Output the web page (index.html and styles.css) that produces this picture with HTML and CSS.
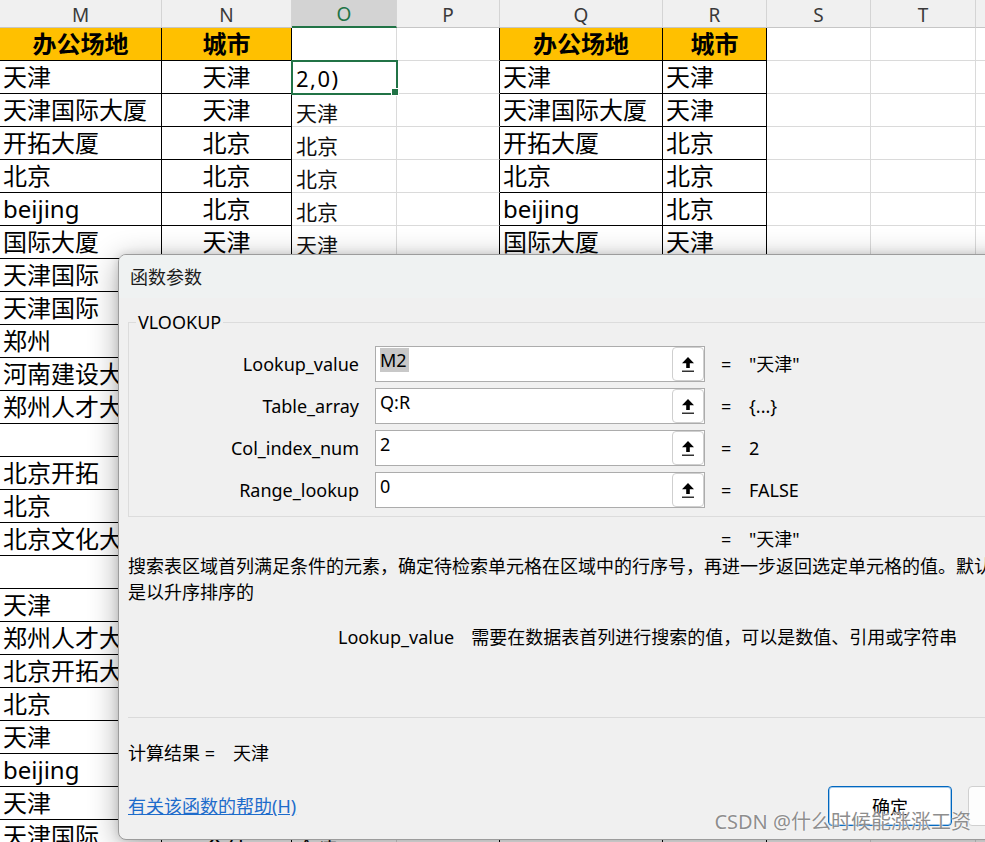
FILE: index.html
```html
<!DOCTYPE html>
<html lang="zh-CN">
<head>
<meta charset="utf-8">
<title>函数参数 - VLOOKUP</title>
<link rel="stylesheet" href="styles.css">
</head>
<body>
<div class="app">
  <div class="sheet">
    <div class="colhead">M</div><div class="colhead">N</div><div class="colhead sel">O</div><div class="colhead">P</div><div class="colhead">Q</div><div class="colhead">R</div><div class="colhead">S</div><div class="colhead">T</div><div class="colhead"></div>

    <div class="cell tb hd">办公场地</div><div class="cell tb hd">城市</div><div class="cell"></div><div class="cell pe"></div><div class="cell tb hd">办公场地</div><div class="cell tb hd">城市</div><div class="cell"></div><div class="cell"></div><div class="cell"></div>

    <div class="cell tb">天津</div><div class="cell tb ctr">天津</div><div class="cell active"><span class="edit">2,0)</span></div><div class="cell pe"></div><div class="cell tb">天津</div><div class="cell tb">天津</div><div class="cell"></div><div class="cell"></div><div class="cell"></div>

    <div class="cell tb">天津国际大厦</div><div class="cell tb ctr">天津</div><div class="cell oc">天津</div><div class="cell pe"></div><div class="cell tb">天津国际大厦</div><div class="cell tb">天津</div><div class="cell"></div><div class="cell"></div><div class="cell"></div>

    <div class="cell tb">开拓大厦</div><div class="cell tb ctr">北京</div><div class="cell oc">北京</div><div class="cell pe"></div><div class="cell tb">开拓大厦</div><div class="cell tb">北京</div><div class="cell"></div><div class="cell"></div><div class="cell"></div>

    <div class="cell tb">北京</div><div class="cell tb ctr">北京</div><div class="cell oc">北京</div><div class="cell pe"></div><div class="cell tb">北京</div><div class="cell tb">北京</div><div class="cell"></div><div class="cell"></div><div class="cell"></div>

    <div class="cell tb">beijing</div><div class="cell tb ctr">北京</div><div class="cell oc">北京</div><div class="cell pe"></div><div class="cell tb">beijing</div><div class="cell tb">北京</div><div class="cell"></div><div class="cell"></div><div class="cell"></div>

    <div class="cell tb">国际大厦</div><div class="cell tb ctr">天津</div><div class="cell oc">天津</div><div class="cell pe"></div><div class="cell tb">国际大厦</div><div class="cell tb">天津</div><div class="cell"></div><div class="cell"></div><div class="cell"></div>

    <div class="cell tb">天津国际</div><div class="cell tb ctr"></div><div class="cell oc"></div><div class="cell pe"></div><div class="cell tb"></div><div class="cell tb"></div><div class="cell"></div><div class="cell"></div><div class="cell"></div>

    <div class="cell tb">天津国际</div><div class="cell tb ctr"></div><div class="cell oc"></div><div class="cell pe"></div><div class="cell tb"></div><div class="cell tb"></div><div class="cell"></div><div class="cell"></div><div class="cell"></div>

    <div class="cell tb">郑州</div><div class="cell tb ctr"></div><div class="cell oc"></div><div class="cell pe"></div><div class="cell tb"></div><div class="cell tb"></div><div class="cell"></div><div class="cell"></div><div class="cell"></div>

    <div class="cell tb">河南建设大厦</div><div class="cell tb ctr"></div><div class="cell oc"></div><div class="cell pe"></div><div class="cell tb"></div><div class="cell tb"></div><div class="cell"></div><div class="cell"></div><div class="cell"></div>

    <div class="cell tb">郑州人才大厦</div><div class="cell tb ctr"></div><div class="cell oc"></div><div class="cell pe"></div><div class="cell tb"></div><div class="cell tb"></div><div class="cell"></div><div class="cell"></div><div class="cell"></div>

    <div class="cell tb"></div><div class="cell tb ctr"></div><div class="cell oc"></div><div class="cell pe"></div><div class="cell tb"></div><div class="cell tb"></div><div class="cell"></div><div class="cell"></div><div class="cell"></div>

    <div class="cell tb">北京开拓</div><div class="cell tb ctr"></div><div class="cell oc"></div><div class="cell pe"></div><div class="cell tb"></div><div class="cell tb"></div><div class="cell"></div><div class="cell"></div><div class="cell"></div>

    <div class="cell tb">北京</div><div class="cell tb ctr"></div><div class="cell oc"></div><div class="cell pe"></div><div class="cell tb"></div><div class="cell tb"></div><div class="cell"></div><div class="cell"></div><div class="cell"></div>

    <div class="cell tb">北京文化大厦</div><div class="cell tb ctr"></div><div class="cell oc"></div><div class="cell pe"></div><div class="cell tb"></div><div class="cell tb"></div><div class="cell"></div><div class="cell"></div><div class="cell"></div>

    <div class="cell tb"></div><div class="cell tb ctr"></div><div class="cell oc"></div><div class="cell pe"></div><div class="cell tb"></div><div class="cell tb"></div><div class="cell"></div><div class="cell"></div><div class="cell"></div>

    <div class="cell tb">天津</div><div class="cell tb ctr"></div><div class="cell oc"></div><div class="cell pe"></div><div class="cell tb"></div><div class="cell tb"></div><div class="cell"></div><div class="cell"></div><div class="cell"></div>

    <div class="cell tb">郑州人才大厦</div><div class="cell tb ctr"></div><div class="cell oc"></div><div class="cell pe"></div><div class="cell tb"></div><div class="cell tb"></div><div class="cell"></div><div class="cell"></div><div class="cell"></div>

    <div class="cell tb">北京开拓大厦</div><div class="cell tb ctr"></div><div class="cell oc"></div><div class="cell pe"></div><div class="cell tb"></div><div class="cell tb"></div><div class="cell"></div><div class="cell"></div><div class="cell"></div>

    <div class="cell tb">北京</div><div class="cell tb ctr"></div><div class="cell oc"></div><div class="cell pe"></div><div class="cell tb"></div><div class="cell tb"></div><div class="cell"></div><div class="cell"></div><div class="cell"></div>

    <div class="cell tb">天津</div><div class="cell tb ctr"></div><div class="cell oc"></div><div class="cell pe"></div><div class="cell tb"></div><div class="cell tb"></div><div class="cell"></div><div class="cell"></div><div class="cell"></div>

    <div class="cell tb">beijing</div><div class="cell tb ctr"></div><div class="cell oc"></div><div class="cell pe"></div><div class="cell tb"></div><div class="cell tb"></div><div class="cell"></div><div class="cell"></div><div class="cell"></div>

    <div class="cell tb">天津</div><div class="cell tb ctr"></div><div class="cell oc"></div><div class="cell pe"></div><div class="cell tb"></div><div class="cell tb"></div><div class="cell"></div><div class="cell"></div><div class="cell"></div>

    <div class="cell tb">天津国际</div><div class="cell tb ctr">天津</div><div class="cell oc">天津</div><div class="cell pe"></div><div class="cell tb"></div><div class="cell tb"></div><div class="cell"></div><div class="cell"></div><div class="cell"></div>
  </div>

  <div class="dialog">
    <div class="dlg-title">函数参数</div>
    <fieldset class="args">
      <legend>VLOOKUP</legend>
      <div class="arg-grid">
        <div class="arg-label">Lookup_value</div>
        <div class="arg-input"><span class="arg-text"><span class="selected">M2</span></span><span class="ref-btn"><svg class="ref-icon" width="12" height="15" viewBox="0 0 12 15"><path d="M6 0 L12 6.2 H7.8 V11 H4.2 V6.2 H0 Z" fill="#000"/><rect x="0" y="13.6" width="12" height="1.2" fill="#000"/></svg></span></div>
        <div class="arg-result"><span class="eq">=</span><span>"天津"</span></div>

        <div class="arg-label">Table_array</div>
        <div class="arg-input"><span class="arg-text">Q:R</span><span class="ref-btn"><svg class="ref-icon" width="12" height="15" viewBox="0 0 12 15"><path d="M6 0 L12 6.2 H7.8 V11 H4.2 V6.2 H0 Z" fill="#000"/><rect x="0" y="13.6" width="12" height="1.2" fill="#000"/></svg></span></div>
        <div class="arg-result"><span class="eq">=</span><span>{...}</span></div>

        <div class="arg-label">Col_index_num</div>
        <div class="arg-input"><span class="arg-text">2</span><span class="ref-btn"><svg class="ref-icon" width="12" height="15" viewBox="0 0 12 15"><path d="M6 0 L12 6.2 H7.8 V11 H4.2 V6.2 H0 Z" fill="#000"/><rect x="0" y="13.6" width="12" height="1.2" fill="#000"/></svg></span></div>
        <div class="arg-result"><span class="eq">=</span><span>2</span></div>

        <div class="arg-label">Range_lookup</div>
        <div class="arg-input"><span class="arg-text">0</span><span class="ref-btn"><svg class="ref-icon" width="12" height="15" viewBox="0 0 12 15"><path d="M6 0 L12 6.2 H7.8 V11 H4.2 V6.2 H0 Z" fill="#000"/><rect x="0" y="13.6" width="12" height="1.2" fill="#000"/></svg></span></div>
        <div class="arg-result"><span class="eq">=</span><span>FALSE</span></div>
      </div>
    </fieldset>

    <div class="fn-result"><span class="eq">=</span><span>"天津"</span></div>
    <p class="fn-desc">搜索表区域首列满足条件的元素，确定待检索单元格在区域中的行序号，再进一步返回选定单元格的值。默认情况下，表<br>是以升序排序的</p>
    <div class="arg-desc"><span class="arg-name">Lookup_value</span><span>需要在数据表首列进行搜索的值，可以是数值、引用或字符串</span></div>
    <div class="divider"></div>
    <div class="calc">计算结果 =<span class="calc-val">天津</span></div>
    <div class="footer">
      <a class="help" href="#">有关该函数的帮助(H)</a>
      <div class="buttons">
        <button class="btn primary" type="button">确定</button>
        <button class="btn" type="button">取消</button>
      </div>
    </div>
  </div>

  <div class="watermark">CSDN @什么时候能涨涨工资</div>
</div>
</body>
</html>
```

FILE: styles.css
```css
* {
  box-sizing: border-box;
}

html,
body {
  margin: 0;
  padding: 0;
}

body {
  width: 985px;
  height: 842px;
  overflow: hidden;
  background: #ffffff;
  color: #000000;
  font-family: "Noto Sans", "Noto Sans CJK SC", sans-serif;
}

.app {
  position: relative;
  width: 985px;
  height: 842px;
  overflow: hidden;
}

/* ---------- spreadsheet ---------- */
.sheet {
  display: grid;
  grid-template-columns: 162px 130px 105px 103px 163px 104px 104px 105px 40px;
  grid-template-rows: 28px;
  grid-auto-rows: 33px;
}

.colhead {
  background: #f0f0f0;
  border-right: 1px solid #d4d4d4;
  border-bottom: 1px solid #c6c6c6;
  display: flex;
  align-items: center;
  justify-content: center;
  padding-top: 2px;
  font-size: 19px;
  line-height: 24px;
  color: #3a3a3a;
}

.colhead.sel {
  background: #d3d3d3;
  color: #217346;
  border-bottom: 2px solid #217346;
}

.cell {
  border-right: 1px solid #dadada;
  border-bottom: 1px solid #dadada;
  display: flex;
  align-items: center;
  padding-left: 3px;
  font-size: 24px;
  line-height: 32px;
  white-space: nowrap;
  overflow: hidden;
}

.cell.tb {
  border-right-color: #000000;
  border-bottom-color: #000000;
}

.cell.pe {
  border-right-color: #000000;
}

.cell.hd {
  background: #ffc000;
  font-weight: 700;
  justify-content: center;
  padding-left: 0;
}

.cell.ctr {
  justify-content: center;
  padding-left: 0;
}

.cell.oc {
  font-family: "Noto Sans CJK SC", sans-serif;
  font-size: 21px;
  padding-left: 4px;
  padding-top: 4px;
  color: #111111;
}

.cell.active {
  position: relative;
  overflow: visible;
  outline: 2px solid #217346;
  outline-offset: -1px;
  align-items: flex-end;
  padding-left: 4px;
  z-index: 1;
}

.cell.active::after {
  content: "";
  position: absolute;
  right: -3px;
  bottom: -3px;
  width: 6px;
  height: 6px;
  background: #217346;
  border: 1px solid #ffffff;
}

.edit {
  font-size: 22px;
  line-height: 26px;
  letter-spacing: 1.5px;
  padding-bottom: 2px;
}

/* ---------- dialog ---------- */
.dialog {
  position: absolute;
  left: 118px;
  top: 254px;
  width: 984px;
  height: 586px;
  background: #f0f0f0;
  border: 1px solid #9c9c9c;
  border-radius: 8px;
  box-shadow: 0 6px 30px rgba(0, 0, 0, 0.32), 0 0 8px rgba(0, 0, 0, 0.12);
  overflow: hidden;
  font-size: 18px;
  line-height: 24px;
  color: #000000;
}

.dlg-title {
  height: 43px;
  background: #eff2f2;
  padding-left: 11px;
  display: flex;
  align-items: center;
  color: #1b1b1b;
}

.args {
  margin: 12px 9px 0;
  padding: 12px 0 8px;
  border: 1px solid #dcdcdc;
  min-width: 0;
}

.args legend {
  margin-left: 7px;
  padding: 0 2px;
  font-size: 18px;
  line-height: 24px;
}

.arg-grid {
  display: grid;
  grid-template-columns: 230px 330px auto;
  column-gap: 16px;
  row-gap: 6px;
  grid-auto-rows: 36px;
  align-items: center;
}

.arg-label {
  text-align: right;
}

.arg-input {
  height: 36px;
  border: 1px solid #acacac;
  background: #ffffff;
  display: flex;
  align-items: flex-start;
  justify-content: space-between;
  padding-left: 4px;
}

.arg-text {
  padding-top: 2px;
  line-height: 23px;
}

.selected {
  background: #c8c8c8;
  padding-right: 2px;
}

.ref-btn {
  align-self: stretch;
  width: 32px;
  border: 1px solid #cfcfcf;
  border-radius: 4px;
  background: #ffffff;
  display: flex;
  align-items: center;
  justify-content: center;
}

.ref-icon {
  display: block;
}

.arg-result {
  display: flex;
  align-items: center;
}

.eq {
  display: inline-block;
  width: 28px;
}

.fn-result {
  margin: 10px 9px 0;
  padding-left: 593px;
  display: flex;
}

.fn-desc {
  margin: 2px 9px 0;
  line-height: 26px;
  white-space: nowrap;
}

.arg-desc {
  margin: 20px 9px 0 219px;
  display: flex;
  gap: 17px;
  white-space: nowrap;
}

.divider {
  margin: 68px 9px 0;
  height: 1px;
  background: #dadada;
}

.calc {
  margin: 23px 9px 0;
}

.calc-val {
  margin-left: 18px;
}

.footer {
  margin: 21px 9px 0;
  display: flex;
  align-items: center;
}

.help {
  color: #1e6ccb;
  text-decoration: underline;
}

.buttons {
  margin-left: auto;
  display: flex;
  gap: 16px;
}

.btn {
  width: 124px;
  height: 40px;
  border: 1px solid #d0d0d0;
  border-radius: 4px;
  background: #fdfdfd;
  font-family: inherit;
  font-size: 18px;
  color: #000000;
  padding: 0;
}

.btn.primary {
  background: #ffffff;
  border-color: #0067c0;
  box-shadow: inset 0 0 0 1px rgba(0, 103, 192, 0.35);
}

/* ---------- watermark ---------- */
.watermark {
  position: absolute;
  right: 14px;
  top: 810px;
  font-size: 20px;
  line-height: 24px;
  color: #8e8e8e;
  text-shadow: 0 0 2px #ffffff, 0 0 1px #ffffff;
  white-space: nowrap;
}
```
